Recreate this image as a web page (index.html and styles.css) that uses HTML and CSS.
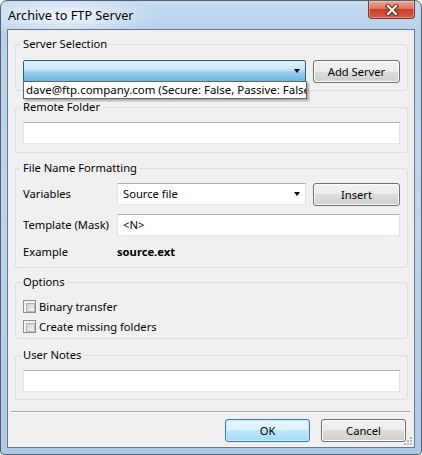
FILE: index.html
```html
<!doctype html>
<html>
<head>
<meta charset="utf-8">
<title>Archive to FTP Server</title>
<link rel="stylesheet" href="styles.css">
</head>
<body>
<div class="window">
	<div class="titlebar">
		<span class="title">Archive to FTP Server</span>
		<span class="close">
			<svg width="14" height="12" viewBox="0 0 14 12"><path d="M3 2 L11 10 M11 2 L3 10" stroke="#5a2b22" stroke-width="4.2" stroke-linecap="square"/><path d="M3 2 L11 10 M11 2 L3 10" stroke="#fff" stroke-width="2.2" stroke-linecap="square"/></svg>
		</span>
	</div>
	<div class="client">
		<fieldset class="group g1">
			<legend>Server Selection</legend>
			<div class="row">
				<div class="combo open">
					<span class="arrow"></span>
					<div class="droplist">dave@ftp.company.com (Secure: False, Passive: False)</div>
				</div>
				<button class="btn">Add Server</button>
			</div>
		</fieldset>
		<fieldset class="group g2">
			<legend>Remote Folder</legend>
			<div class="field"></div>
		</fieldset>
		<fieldset class="group g3">
			<legend>File Name Formatting</legend>
			<div class="row">
				<span class="lbl">Variables</span>
				<div class="combo">Source file<span class="arrow"></span></div>
				<button class="btn">Insert</button>
			</div>
			<div class="row">
				<span class="lbl">Template (Mask)</span>
				<div class="field">&lt;N&gt;</div>
			</div>
			<div class="row example">
				<span class="lbl">Example</span>
				<b>source.ext</b>
			</div>
		</fieldset>
		<fieldset class="group g4">
			<legend>Options</legend>
			<label class="check"><span class="box"></span>Binary transfer</label>
			<label class="check"><span class="box"></span>Create missing folders</label>
		</fieldset>
		<fieldset class="group g5">
			<legend>User Notes</legend>
			<div class="field"></div>
		</fieldset>
		<div class="sep"></div>
		<div class="footer">
			<button class="btn default">OK</button>
			<button class="btn">Cancel</button>
		</div>
		<svg class="grip" width="9" height="9" viewBox="0 0 9 9">
			<g fill="#b8b8b8"><rect x="6" y="0" width="2" height="2"/><rect x="3" y="3" width="2" height="2"/><rect x="6" y="3" width="2" height="2"/><rect x="0" y="6" width="2" height="2"/><rect x="3" y="6" width="2" height="2"/><rect x="6" y="6" width="2" height="2"/></g>
		</svg>
	</div>
</div>
</body>
</html>
```

FILE: styles.css
```css
* { box-sizing: border-box; }
html, body { margin: 0; }
body { background: #fff; width: 422px; height: 455px; overflow: hidden; font-family: "Noto Sans", sans-serif; font-size: 11.2px; color: #000; }

.window { height: 455px; border: 1px solid #55616e; border-radius: 7px 7px 4px 4px; padding: 0 6px 6px;
	background: radial-gradient(ellipse 95px 20px at 62px 15px, rgba(255,255,255,.8), rgba(255,255,255,0)),
		linear-gradient(to bottom, #c4dbf1 0, #b9d2ec 28px, #bed6ee 200px, #b0cae6 100%);
	display: flex; flex-direction: column; }
.titlebar { height: 28px; flex: none; display: flex; justify-content: space-between; align-items: flex-start; }
.title { padding: 7px 0 0 1px; font-size: 12.7px; line-height: 14px; }
.close { width: 47px; height: 18px; border: 1px solid #7d3427; border-top: none; border-radius: 0 0 4px 4px;
	background: linear-gradient(#eaa797, #dc7561 45%, #c8402a 50%, #d8563e);
	box-shadow: inset 0 0 0 1px rgba(255,255,255,.35);
	display: flex; align-items: center; justify-content: center; }

.client { flex: 1; min-height: 0; border: 1px solid #6b7a8a; background: #f0f0f0; display: flex; flex-direction: column; position: relative; }

.group { flex: none; margin: 9px 6px 0 7px; padding: 8px 7px 8px; border: 1px solid #d5dfe5; border-radius: 3px; min-width: 0; }
.group legend { padding: 0 2px; margin-left: -2px; line-height: 14px; }
.g1 { margin-top: 7px; padding-top: 9px; padding-bottom: 7px; }
.g3 { margin-top: 8px; padding-bottom: 7px; }
.g4 { margin-top: 7px; padding-top: 9px; padding-bottom: 3px; }
.g5 { padding-bottom: 7px; }

.row { display: flex; align-items: flex-start; gap: 7px; }
.row + .row { margin-top: 8px; }
.lbl { width: 87px; line-height: 22px; flex: none; white-space: nowrap; }
.example { line-height: 16px; }
.example .lbl { line-height: 16px; }
.example b { font-weight: bold; }

.field { height: 22px; flex: 1; background: #fff; border: 1px solid; border-color: #abadb3 #dbdfe6 #e3e9ef #e2e3ea; padding: 0 5px; line-height: 20px; }

.combo { height: 22px; flex: 1; position: relative; background: #fff; border: 1px solid; border-color: #abadb3 #dbdfe6 #e3e9ef #e2e3ea; padding: 0 5px; line-height: 20px; }
.combo .arrow { position: absolute; right: 5px; top: 8px; width: 0; height: 0; border-left: 3.5px solid transparent; border-right: 3.5px solid transparent; border-top: 4px solid #000; }
.combo.open { border-color: #2c628b; border-radius: 2px; background: linear-gradient(#e3f3fc, #c3e4f6 45%, #9bd1ef 55%, #6db7e0); }
.droplist { position: absolute; top: 100%; left: -1px; width: 284px; height: 18px; z-index: 2; background: #fff; border: 1px solid #646464; padding: 0 2px; font-size: 11.45px; line-height: 16px; white-space: nowrap; overflow: hidden; box-shadow: 2px 2px 2px rgba(0,0,0,.3); }

.btn { height: 23px; width: 87px; flex: none; font: inherit; color: #000; padding: 0; border: 1px solid #707070; border-radius: 3px;
	background: linear-gradient(#f2f2f2, #ebebeb 50%, #dddddd 50%, #cfcfcf);
	box-shadow: inset 0 0 0 1px #fbfbfb; }
.btn.default { border-color: #3c7fb1; background: linear-gradient(#eaf6fd, #d9f0fc 50%, #bee6fd 50%, #a7d9f5); box-shadow: inset 0 0 0 1px #c4e9fc; }

.check { display: flex; align-items: center; gap: 3px; height: 17px; }
.check + .check { margin-top: 3px; }
.box { width: 13px; height: 13px; border: 1px solid #8e8f8f; background: #f4f4f4; padding: 2px; }
.box::before { content: ""; display: block; width: 7px; height: 7px; border: 1px solid #b2b5b8; background: linear-gradient(135deg, #cbcfd5, #f7f7f7); }

.sep { flex: none; margin: 11px 4px 0 3px; height: 2px; border-top: 1px solid #a0a0a0; border-bottom: 1px solid #fff; }
.footer { flex: none; display: flex; justify-content: flex-end; gap: 11px; margin: 6px 8px 0 0; }
.footer .btn { width: 85px; }
.grip { position: absolute; right: 1px; bottom: 1px; }
```
